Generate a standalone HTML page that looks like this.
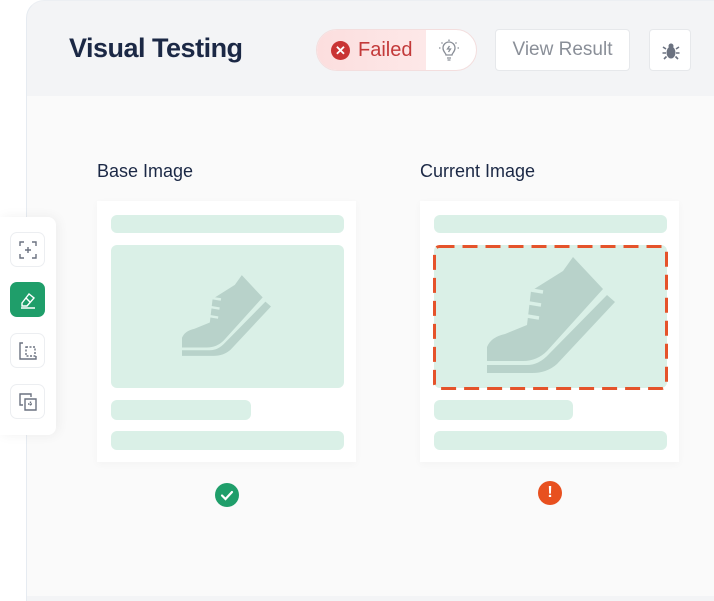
<!DOCTYPE html>
<html><head><style>
body{margin:0;width:714px;height:576px;background:#fff;position:relative;overflow:hidden;font-family:"Liberation Sans",sans-serif}
.a{position:absolute}
.outer{left:26px;top:0;width:720px;height:600px;border-left:1px solid #e6ebf1;border-top:1px solid #eceff3;border-top-left-radius:18px;background:#f3f4f6;}
.content{left:27px;top:96px;width:700px;height:500px;background:#fafafa}
.card{background:#fff;width:259px;height:261px;box-shadow:0 2px 8px rgba(0,0,0,.03)}
.bar{background:#daf0e7;border-radius:6px;position:absolute}
.tb{left:10px;width:35px;height:35px;border:1px solid #eceef1;border-radius:7px;background:#fff;box-sizing:border-box;display:flex;align-items:center;justify-content:center}
</style></head><body>
<div class="a outer"></div>
<div class="a content"></div>
<div class="a" style="left:69px;top:33px;font-size:27px;font-weight:bold;color:#1b2845;letter-spacing:-0.5px">Visual Testing</div>
<div class="a" style="left:316px;top:29px;width:161px;height:42px;border-radius:21px;background:#fff;border:1px solid #f3dede;box-sizing:border-box;overflow:hidden">
 <div class="a" style="left:0;top:0;width:109px;height:42px;background:linear-gradient(90deg,#fcdede,#fde8e8)"></div>
 <div class="a" style="left:14px;top:11px;width:19px;height:19px;border-radius:50%;background:#c93434;color:#fff;font-size:13px;font-weight:bold;text-align:center;line-height:19px">✕</div>
 <div class="a" style="left:41px;top:9px;font-size:20px;color:#c33a3a">Failed</div>
 <svg class="a" style="left:120px;top:9px" width="24" height="24" viewBox="0 0 24 24" fill="none" stroke="#8a8f98" stroke-width="1.3"><path d="M9 16c0-2-3-3-3-7a6 6 0 0 1 12 0c0 4-3 5-3 7z M10 19h4 M10.5 21h3 M12.5 7l-2 3h3l-2 3 M2 9h1.5 M20.5 9H22 M4.5 3.5l1 1 M19.5 3.5l-1 1 M12 0.5v1.5"/></svg>
</div>
<div class="a" style="left:495px;top:29px;width:135px;height:42px;background:#fff;border:1px solid #e6e8eb;border-radius:4px;box-sizing:border-box;font-size:19px;color:#8a8f98;line-height:40px;text-align:center">View Result</div>
<div class="a" style="left:649px;top:29px;width:42px;height:42px;background:#fff;border:1px solid #e6e8eb;border-radius:4px;box-sizing:border-box">
 <svg class="a" style="left:11px;top:11px" width="20" height="20" viewBox="0 0 20 20" fill="#6b7280"><ellipse cx="10" cy="11.5" rx="4.5" ry="6"/><circle cx="10" cy="5" r="2.5"/><path d="M5 8L2 6M15 8l3-2M5 12H1.5M15 12h3.5M5.5 15.5L3 18M14.5 15.5L17 18" stroke="#6b7280" stroke-width="1.6"/></svg>
</div>
<div class="a" style="left:97px;top:161px;font-size:18px;color:#1b2845">Base Image</div>
<div class="a" style="left:420px;top:161px;font-size:18px;color:#1b2845">Current Image</div>

<div class="a card" style="left:97px;top:201px">
 <div class="bar" style="left:14px;top:14px;width:233px;height:18px"></div>
 <div class="bar" style="left:14px;top:44px;width:233px;height:143px"></div>
 <div class="bar" style="left:14px;top:199px;width:140px;height:20px"></div>
 <div class="bar" style="left:14px;top:230px;width:233px;height:19px"></div>
 <svg class="a" style="left:85px;top:74px" width="89" height="81" viewBox="0 0 128 116"><g fill="#b8d2ca"><path d="M0 90Q4 80 18 77L40 68L44 34L76 14L86 0L116 32L60 94Q50 104 36 104L0 104Z"/><path d="M0 108L40 108Q52 108 62 97L120 38L128 45L70 107Q60 116 45 116L0 116Z"/></g><g stroke="#daf0e7" stroke-width="3.5"><path d="M44 33l12 2M42 46l12 2M40 59l12 2"/></g></svg>
</div>
<div class="a card" style="left:420px;top:201px">
 <div class="bar" style="left:14px;top:14px;width:233px;height:18px"></div>
 <div class="bar" style="left:14px;top:44px;width:233px;height:143px"></div>
 <div class="bar" style="left:14px;top:199px;width:139px;height:20px"></div>
 <div class="bar" style="left:14px;top:230px;width:233px;height:19px"></div>
 <svg class="a" style="left:67px;top:56px" width="128" height="116" viewBox="0 0 128 116"><g fill="#b8d2ca"><path d="M0 90Q4 80 18 77L40 68L44 34L76 14L86 0L116 32L60 94Q50 104 36 104L0 104Z"/><path d="M0 108L40 108Q52 108 62 97L120 38L128 45L70 107Q60 116 45 116L0 116Z"/></g><g stroke="#daf0e7" stroke-width="3.5"><path d="M44 33l12 2M42 46l12 2M40 59l12 2"/></g></svg>
 <svg class="a" style="left:13px;top:44px" width="235" height="145"><rect x="1.5" y="1.5" width="232" height="142" rx="5" fill="none" stroke="#e5532b" stroke-width="3" stroke-dasharray="15 8"/></svg>
</div>
<div class="a" style="left:215px;top:483px;width:24px;height:24px;border-radius:50%;background:#1f9e6a"><svg width="24" height="24"><path d="M7 12.5l3.5 3.5L17 9" fill="none" stroke="#fff" stroke-width="2.2" stroke-linecap="round"/></svg></div>
<div class="a" style="left:538px;top:481px;width:24px;height:24px;border-radius:50%;background:#e8501f;color:#fff;font-weight:bold;font-size:16px;text-align:center;line-height:24px">!</div>

<div class="a" style="left:0;top:217px;width:56px;height:218px;background:#fff;border-radius:0 8px 8px 0;box-shadow:2px 0 12px rgba(0,0,0,.06)">
 <div class="a tb" style="top:15px"><svg width="18" height="18" viewBox="0 0 18 18" fill="none" stroke="#6b7280" stroke-width="1.4"><path d="M1 5V1h4M13 1h4v4M17 13v4h-4M5 17H1v-4M9 6v6M6 9h6"/></svg></div>
 <div class="a tb" style="top:65px;background:#1f9e6a;border:none"><svg width="18" height="18" viewBox="0 0 18 18" fill="none" stroke="#fff" stroke-width="1.4"><path d="M3 12l7-9 5 4-7 8H3zM7 7l4 4M2 17h14"/></svg></div>
 <div class="a tb" style="top:116px"><svg width="18" height="18" viewBox="0 0 18 18" fill="none" stroke="#6b7280" stroke-width="1.4"><path d="M4 1H1v16h16v-3"/><rect x="7" y="5" width="9" height="9" stroke-dasharray="2 1.5"/></svg></div>
 <div class="a tb" style="top:167px"><svg width="18" height="18" viewBox="0 0 18 18" fill="none" stroke="#6b7280" stroke-width="1.4"><path d="M12 4V1H1v11h3M6 6h11v11H6z" /><path d="M9 11h5M11.5 8.5v5" stroke-dasharray="1.5 1"/></svg></div>
</div>
</body></html>
